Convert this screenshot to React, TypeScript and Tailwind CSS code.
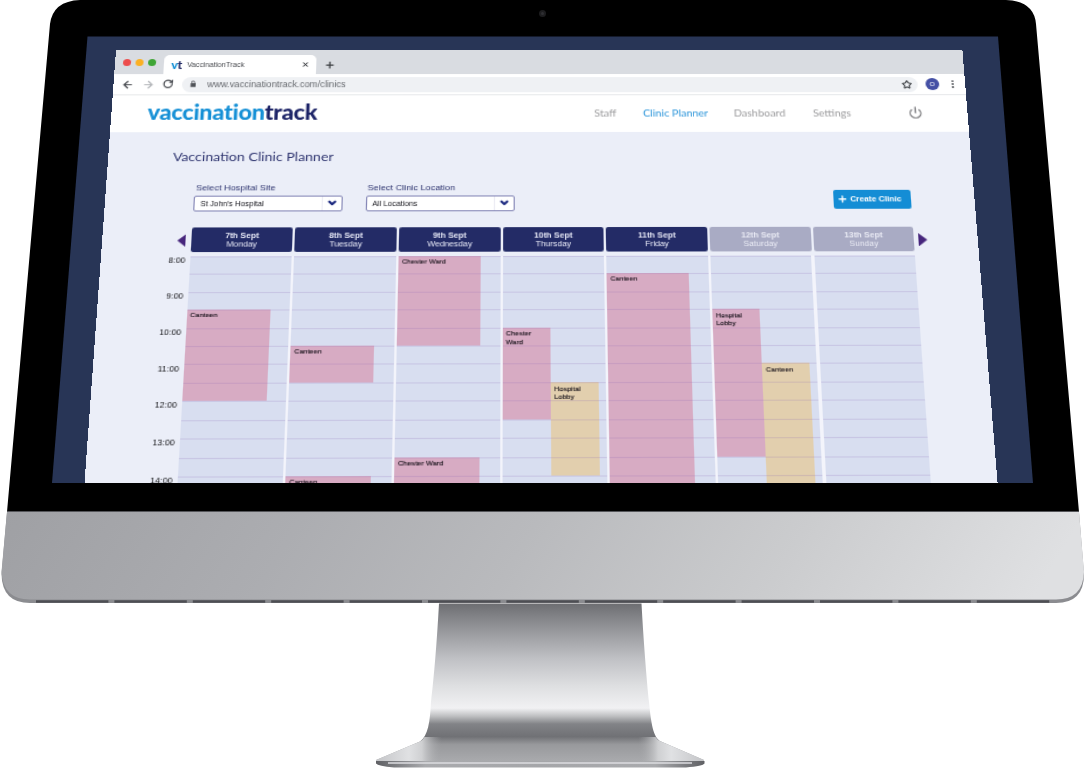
import {
    ArrowLeft,
    ArrowRight,
    ChevronDown,
    EllipsisVertical,
    Plus,
    Power,
    RotateCw,
    Star,
    X,
} from "lucide-react";

interface ClinicEvent {
    label: string;
    start: number; // half-hour slot, 0 = 8:00
    end: number;
    lane: "wide" | "left" | "right";
}

interface Day {
    date: string;
    name: string;
    weekend?: boolean;
    events: ClinicEvent[];
}

const SLOTS = 14;

const days: Day[] = [
    {
        date: "7th Sept",
        name: "Monday",
        events: [{ label: "Canteen", start: 3, end: 8, lane: "wide" }],
    },
    {
        date: "8th Sept",
        name: "Tuesday",
        events: [
            { label: "Canteen", start: 5, end: 7, lane: "wide" },
            { label: "Canteen", start: 12, end: 14, lane: "wide" },
        ],
    },
    {
        date: "9th Sept",
        name: "Wednesday",
        events: [
            { label: "Chester Ward", start: 0, end: 5, lane: "wide" },
            { label: "Chester Ward", start: 11, end: 14, lane: "wide" },
        ],
    },
    {
        date: "10th Sept",
        name: "Thursday",
        events: [
            { label: "Chester Ward", start: 4, end: 9, lane: "left" },
            { label: "Hospital Lobby", start: 7, end: 12, lane: "right" },
        ],
    },
    {
        date: "11th Sept",
        name: "Friday",
        events: [{ label: "Canteen", start: 1, end: 14, lane: "wide" }],
    },
    {
        date: "12th Sept",
        name: "Saturday",
        weekend: true,
        events: [
            { label: "Hospital Lobby", start: 3, end: 11, lane: "left" },
            { label: "Canteen", start: 6, end: 14, lane: "right" },
        ],
    },
    { date: "13th Sept", name: "Sunday", weekend: true, events: [] },
];

const hours = ["8:00", "9:00", "10:00", "11:00", "12:00", "13:00", "14:00"];

const laneClasses = {
    wide: "col-start-1 col-span-2 mr-[10.500px] bg-[#d7abc3]",
    left: "col-start-1 bg-[#d7abc3]",
    right: "col-start-2 bg-[#e2cfae]",
};

// Monitor case: bezel, chin and stand
function Monitor() {
    return (
        <svg
            className="absolute inset-0"
            width="1085"
            height="773"
            viewBox="0 0 1085 773"
        >
            <defs>
                <linearGradient id="chin" x1="0" y1="0" x2="1" y2="0.05">
                    <stop offset="0" stopColor="#9fa0a4" />
                    <stop offset="0.28" stopColor="#acadb1" />
                    <stop offset="0.5" stopColor="#b9babd" />
                    <stop offset="0.75" stopColor="#cbccce" />
                    <stop offset="1" stopColor="#dfe0e2" />
                </linearGradient>
                <linearGradient id="neck" x1="0" y1="0" x2="0" y2="1">
                    <stop offset="0" stopColor="#6d6e72" />
                    <stop offset="0.15" stopColor="#929397" />
                    <stop offset="0.35" stopColor="#c0c1c5" />
                    <stop offset="0.52" stopColor="#dedfe1" />
                    <stop offset="0.66" stopColor="#f1f1f3" />
                    <stop offset="0.71" stopColor="#bfc0c2" />
                    <stop offset="0.76" stopColor="#828387" />
                    <stop offset="0.84" stopColor="#707175" />
                    <stop offset="0.89" stopColor="#98999c" />
                    <stop offset="1" stopColor="#aaabae" />
                </linearGradient>
                <linearGradient id="foot" x1="0" y1="0" x2="1" y2="0">
                    <stop offset="0" stopColor="#c4c5c8" />
                    <stop offset="0.1" stopColor="#e0e1e3" />
                    <stop offset="0.14" stopColor="#cfd0d2" />
                    <stop offset="0.2" stopColor="#a2a3a6" stopOpacity="0" />
                    <stop offset="0.8" stopColor="#a2a3a6" stopOpacity="0" />
                    <stop offset="0.86" stopColor="#cfd0d2" />
                    <stop offset="0.9" stopColor="#e0e1e3" />
                    <stop offset="1" stopColor="#c4c5c8" />
                </linearGradient>
                <linearGradient id="lip" x1="0" y1="0" x2="1" y2="0">
                    <stop offset="0" stopColor="#5f6064" />
                    <stop offset="0.15" stopColor="#a9aaad" />
                    <stop offset="0.5" stopColor="#a5a6a9" />
                    <stop offset="0.85" stopColor="#a9aaad" />
                    <stop offset="1" stopColor="#5f6064" />
                </linearGradient>
            </defs>
            <path
                d="M80 0 H1006 Q1034 1 1036 24 L1079 512 H7 L50 24 Q53 1 80 0 Z"
                fill="#000"
            />
            <circle cx="542.5" cy="13.5" r="3.5" fill="#1d1d1f" />
            <circle cx="542.5" cy="13.5" r="1.5" fill="#2f2f33" />
            <path
                d="M7 512 H1079 L1084 574 Q1084 603 1056 603 H30 Q2 603 1.5 574 Z"
                fill="#8b8c90"
            />
            <path
                d="M7 512 H1079 L1084 572 Q1083 599.500 1056 599.500 H30 Q3 599.500 1.500 572 Z"
                fill="url(#chin)"
            />
            <path d="M7 511.500 H1079" stroke="#55565a" strokeWidth="1" />
            <path
                d="M36 601.500 H1050"
                stroke="#4d4e53"
                strokeWidth="2.4"
                strokeDasharray="72.4 6"
            />
            <path
                d="M439 603.500 H641.500 C643.500 640 646.500 678 649 702 C651 722 653 738 661 741.500 L704 760 V762 H376 V760 L420 741.500 C428 736 430 722 431 702 C434 678 437 640 439 603.500 Z"
                fill="url(#neck)"
            />
            <path
                d="M424.500 737 Q423 740 420 741.500 L376 760 V762 H704 V760 L661 741.500 Q657 740 655.500 737 Z"
                fill="url(#foot)"
            />
            <path
                d="M376 761 H704.500 V763.500 Q703 766 686 767.500 H394 Q378 766 376 763.500 Z"
                fill="url(#lip)"
            />
            <path d="M388 763 H692" stroke="#dcdde0" strokeWidth="1.5" />
        </svg>
    );
}

function BrowserChrome() {
    return (
        <div className="flex-none font-['Liberation_Sans',Arial,sans-serif]">
            {/* Tab strip */}
            <div className="flex h-[24px] items-end bg-[#d9dce1]">
                <div className="flex h-[24px] w-[43px] items-center gap-[4px] pt-[0.500px] pl-[7px]">
                    <span className="h-[7.500px] w-[7px] rounded-full bg-[#ed4c4c]" />
                    <span className="h-[7.500px] w-[7px] rounded-full bg-[#fbb024]" />
                    <span className="h-[7.500px] w-[7px] rounded-full bg-[#3ea535]" />
                </div>
                <div className="flex h-[19px] w-[134px] items-center rounded-t-[5px] bg-white pt-[0.800px] pr-[6.300px] pl-[6.500px]">
                    <span className="w-[13.900px] pb-[1px] font-['Lato',sans-serif] text-[11px] leading-none font-black tracking-[-0.3px] text-[#1590d6]">
                        v<span className="text-[#252c66]">t</span>
                    </span>
                    <span className="flex-1 text-[6.700px] text-[#4b4d52]">
                        VaccinationTrack
                    </span>
                    <X className="h-[7px] w-[7px] text-[#3c3f43]" strokeWidth={3.5} />
                </div>
                <Plus className="mb-[4px] ml-[7px] h-[10px] w-[10px] text-[#3c3f43]" strokeWidth={3} />
            </div>
            {/* Toolbar */}
            <div className="flex h-[20.500px] items-center border-b border-[#e6e8ea] bg-white pt-[0.500px] pl-[6.500px]">
                <ArrowLeft className="h-[11px] w-[11px] text-[#4c4f54]" strokeWidth={2.7} />
                <ArrowRight className="ml-[7px] h-[11px] w-[11px] text-[#b4b6ba]" strokeWidth={2.7} />
                <RotateCw className="ml-[7.500px] h-[9.500px] w-[9.500px] text-[#4c4f54]" strokeWidth={3.2} />
                <div className="ml-[7.500px] flex h-[15px] w-[647px] items-center rounded-full bg-[#eff1f4] pr-[5px] pl-[7px]">
                    <svg className="h-[7.500px] w-[5.500px]" viewBox="0 0 11 14">
                        <path d="M1 5.500 H10 V13 H1 Z" fill="#505358" />
                        <path d="M3 6 V3.500 a2.500 2.500 0 0 1 5 0 V6" fill="none" stroke="#505358" strokeWidth="1.500" />
                    </svg>
                    <span className="ml-[9.500px] flex-1 pt-[2px] text-[8.250px] leading-none text-[#66696e]">
                        www.vaccinationtrack.com/clinics
                    </span>
                    <Star className="h-[9px] w-[9px] text-[#44474b]" strokeWidth={3} />
                </div>
                <span className="ml-[6.500px] flex h-[12.500px] w-[12.500px] items-center justify-center rounded-full bg-[#4550a5] text-[6px] text-white">
                    O
                </span>
                <EllipsisVertical className="ml-[7px] h-[10px] w-[10px] text-[#4c4f54]" strokeWidth={2.6} />
            </div>
        </div>
    );
}

function SiteHeader() {
    return (
        <header className="flex h-[36px] flex-none items-center bg-white pl-[31.500px] font-['Lato',sans-serif]">
            <div className="w-[390px] pb-[2px] text-[20.500px] leading-none font-black tracking-[-0.220px] text-[#1590d6]">
                vaccination<span className="text-[#1c2367]">track</span>
            </div>
            <nav className="flex w-[275px] pt-[2px] text-[9.500px] text-[#9b9b9d]">
                <a className="w-[42.700px]">Staff</a>
                <a className="w-[79.500px] whitespace-nowrap text-[#2b95da]">Clinic Planner</a>
                <a className="w-[69.500px]">Dashboard</a>
                <a>Settings</a>
            </nav>
            <Power className="h-[12.500px] w-[12.500px] text-[#838386]" strokeWidth={2.6} />
        </header>
    );
}

function SelectField({ label, value }: { label: string; value: string }) {
    return (
        <div className="w-[127.500px]">
            <div className="h-[12.500px] pt-[0.500px] pl-[1px] text-[7.900px] leading-[9px] text-[#2f3570]">
                {label}
            </div>
            <div className="flex h-[15.500px] items-center rounded-[2px] border border-[#8486b6] bg-white pl-[4.500px] text-[6.800px] text-[#15151c]">
                <span className="flex-1 pt-[0.800px]">{value}</span>
                <span className="flex h-full w-[17px] items-center justify-center border-l border-[#ececf4]">
                    <ChevronDown className="h-[10px] w-[10px] text-[#1d2a80]" strokeWidth={5} />
                </span>
            </div>
        </div>
    );
}

function DayColumn({ day }: { day: Day }) {
    return (
        <div className="grid w-[86.600px] grid-cols-[40.300px_40.300px] grid-rows-[repeat(14,16.480px)] content-start bg-[#d8def0]">
            {day.events.map((event) => (
                <div
                    key={event.start}
                    className={`pl-[3px] text-[6.100px] leading-[7.300px] text-[#17121a] [-webkit-text-stroke:0.1px_#17121a] ${laneClasses[event.lane]} ${
                        event.lane === "wide" ? "pt-[1.200px]" : "pt-[1.900px]"
                    }`}
                    style={{ gridRow: `${event.start + 1} / ${event.end + 1}` }}
                >
                    {event.label}
                </div>
            ))}
            {Array.from({ length: SLOTS }, (_, i) => (
                <div
                    key={`slot-${i}`}
                    className="col-start-1 w-[86.600px] border-t border-[#8a68b5]/20"
                    style={{ gridRow: i + 1 }}
                />
            ))}
        </div>
    );
}

function Planner() {
    return (
        <main className="flex-1 bg-[#ebeef8] font-['Liberation_Sans',Arial,sans-serif]">
            <h1 className="h-[48.700px] pt-[16px] pl-[55.900px] font-['Lato',sans-serif] text-[12.250px] leading-[16px] text-[#2f3570]">
                Vaccination Clinic Planner
            </h1>
            <div className="flex h-[42.700px] pl-[76.400px]">
                <SelectField label="Select Hospital Site" value="St John’s Hospital" />
                <div className="w-[20.200px]" />
                <SelectField label="Select Clinic Location" value="All Locations" />
                <button className="mt-[8.300px] ml-[275.300px] flex h-[17.500px] w-[67.300px] items-center rounded-[2px] bg-[#148dd5] pl-[3px] text-[7.270px] font-bold whitespace-nowrap text-white">
                    <Plus className="mr-[2px] h-[9.500px] w-[9.500px]" strokeWidth={3.2} />
                    <span className="pt-[0.600px]">Create Clinic</span>
                </button>
            </div>

            {/* Day headers */}
            <div className="flex h-[26.800px] pl-[63.500px]">
                <svg className="mt-[6px] mr-[4.500px] h-[12.500px] w-[7.600px]" viewBox="0 0 8 13">
                    <path d="M8 0 V13 L0 6.500 Z" fill="#46257c" />
                </svg>
                <div className="flex gap-[1.800px]">
                    {days.map((day) => (
                        <div
                            key={day.name}
                            className={`flex h-[23.300px] w-[86.870px] flex-col items-center rounded-[2px] pt-[3.700px] text-[7.300px] leading-[8.600px] ${
                                day.weekend
                                    ? "bg-[#a9abc4] text-[#e9eaf4]"
                                    : "bg-[#232b66] text-[#e6e8f6]"
                            }`}
                        >
                            <span className="font-bold">{day.date}</span>
                            <span>{day.name}</span>
                        </div>
                    ))}
                </div>
                <svg className="mt-[6px] ml-[4px] h-[12.500px] w-[7.600px]" viewBox="0 0 8 13">
                    <path d="M0 0 V13 L8 6.500 Z" fill="#46257c" />
                </svg>
            </div>

            {/* Calendar */}
            <div className="flex">
                <div className="w-[75.600px] pr-[3.800px] text-right text-[7.300px] leading-[8px] text-[#111114]">
                    {hours.map((hour) => (
                        <div key={hour} className="h-[32.960px]">
                            {hour}
                        </div>
                    ))}
                </div>
                <div className="flex gap-[2.070px] bg-[#f3f4fb]">
                    {days.map((day) => (
                        <DayColumn key={day.name} day={day} />
                    ))}
                </div>
            </div>
        </main>
    );
}

export default function App() {
    return (
        <div className="relative h-[773px] w-[1085px] overflow-hidden bg-white">
            <Monitor />
            {/* Display area, cut to the shape of the tilted glass */}
            <div className="relative h-[483px] w-full overflow-hidden bg-[#283556] pt-[50px] pl-[116px] [clip-path:polygon(87.5px_36.5px,998px_36.5px,1033px_483px,52px_483px)]">
                <div className="flex h-[430px] w-[749.300px] origin-top-left flex-col overflow-hidden [transform:matrix3d(1.1357,0,0,0.00000667,-0.07275,1,0,-0.0001819,0,0,1,0,0,0,0,1)]">
                    <BrowserChrome />
                    <SiteHeader />
                    <Planner />
                </div>
            </div>
        </div>
    );
}
